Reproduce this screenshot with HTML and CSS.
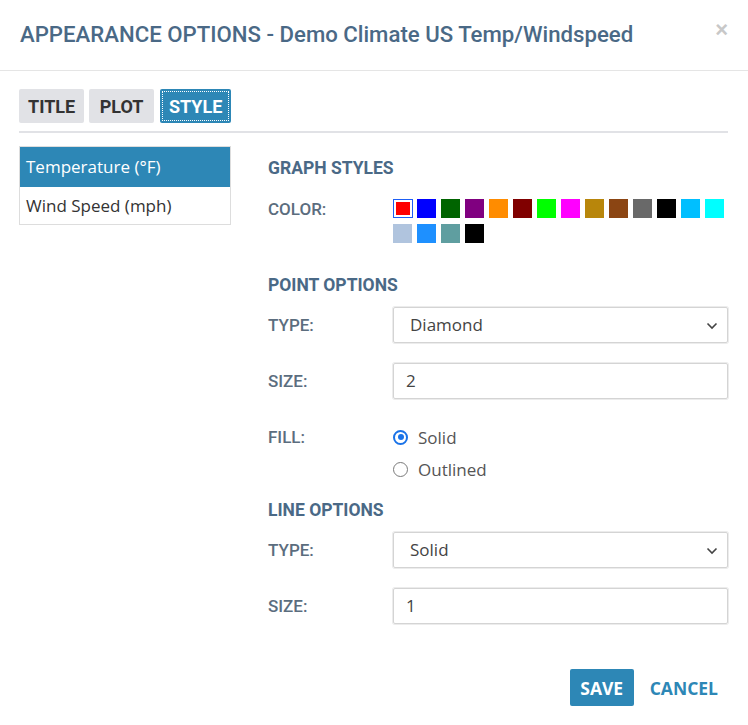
FILE: index.html
```html
<!DOCTYPE html>
<html>
<head>
<meta charset="utf-8">
<link rel="stylesheet" href="styles.css">
</head>
<body>
<div class="modal">
  <div class="modal-header">
    <h1 class="modal-title">APPEARANCE OPTIONS - Demo Climate US Temp/Windspeed</h1>
    <span class="close">&times;</span>
  </div>
  <div class="modal-body">
    <div class="tabs">
      <button class="tab">TITLE</button>
      <button class="tab tab-plot">PLOT</button>
      <button class="tab active">STYLE</button>
    </div>
    <div class="content">
      <ul class="series-list">
        <li class="series selected">Temperature (°F)</li>
        <li class="series">Wind Speed (mph)</li>
      </ul>
      <div class="options">
        <h2 class="section first">GRAPH STYLES</h2>
        <div class="row color-row">
          <div class="label">COLOR:</div>
          <div class="swatches">
            <span class="swatch selected"><span style="background:#ff0000"></span></span>
            <span class="swatch" style="background:#0000ff"></span>
            <span class="swatch" style="background:#006400"></span>
            <span class="swatch" style="background:#800080"></span>
            <span class="swatch" style="background:#ff8c00"></span>
            <span class="swatch" style="background:#800000"></span>
            <span class="swatch" style="background:#00ff00"></span>
            <span class="swatch" style="background:#ff00ff"></span>
            <span class="swatch" style="background:#b8860b"></span>
            <span class="swatch" style="background:#8b4513"></span>
            <span class="swatch" style="background:#696969"></span>
            <span class="swatch" style="background:#000000"></span>
            <span class="swatch" style="background:#00bfff"></span>
            <span class="swatch" style="background:#00ffff"></span>
            <span class="swatch" style="background:#b0c4de"></span>
            <span class="swatch" style="background:#1e90ff"></span>
            <span class="swatch" style="background:#5f9ea0"></span>
            <span class="swatch" style="background:#000000"></span>
          </div>
        </div>

        <h2 class="section">POINT OPTIONS</h2>
        <div class="row field-row first-field">
          <div class="label">TYPE:</div>
          <div class="select">Diamond<svg class="chev" viewBox="0 0 12 8" width="12" height="8"><path d="M1.5 1.5 L6 6 L10.5 1.5" fill="none" stroke="#444" stroke-width="1.6"/></svg></div>
        </div>
        <div class="row field-row">
          <div class="label">SIZE:</div>
          <div class="input">2</div>
        </div>
        <div class="row fill-row">
          <div class="label">FILL:</div>
          <div class="radios">
            <label class="radio"><span class="dot checked"></span>Solid</label>
            <label class="radio"><span class="dot"></span>Outlined</label>
          </div>
        </div>

        <h2 class="section line-sec">LINE OPTIONS</h2>
        <div class="row field-row first-field">
          <div class="label">TYPE:</div>
          <div class="select">Solid<svg class="chev" viewBox="0 0 12 8" width="12" height="8"><path d="M1.5 1.5 L6 6 L10.5 1.5" fill="none" stroke="#444" stroke-width="1.6"/></svg></div>
        </div>
        <div class="row field-row">
          <div class="label">SIZE:</div>
          <div class="input">1</div>
        </div>
      </div>
    </div>
  </div>
  <div class="modal-footer">
    <button class="btn save">SAVE</button>
    <button class="btn cancel">CANCEL</button>
  </div>
</div>
</body>
</html>
```

FILE: styles.css
```css
* { box-sizing: border-box; }
html, body { margin: 0; padding: 0; background: #fff; }
body { font-family: "Open Sans", "Liberation Sans", sans-serif; color: #333; }

.modal { width: 748px; height: 725px; background: #fff; }

.modal-header {
  display: flex;
  align-items: center;
  justify-content: space-between;
  height: 71px;
  padding: 0 20px 2px 20px;
  border-bottom: 1px solid #e5e5e5;
}
.modal-title {
  margin: 0;
  font-family: Roboto, "Liberation Sans", sans-serif;
  font-weight: 500;
  font-size: 22.2px;
  color: #4a6986;
}
.close {
  font-family: "Liberation Sans", sans-serif;
  font-size: 22px;
  font-weight: bold;
  color: #c8c8c8;
  line-height: 1;
  margin-top: -8px;
}

.modal-body { padding: 18px 20px 0 19px; }

.tabs {
  display: flex;
  gap: 5px;
  padding-bottom: 8px;
  border-bottom: 2px solid #e1e2e6;
}
.tab {
  height: 34px;
  padding: 0 9px;
  border: none;
  border-radius: 2px;
  background: #e1e2e6;
  color: #333;
  font-family: Roboto, sans-serif;
  font-weight: 700;
  font-size: 18px;
}
.tab-plot { padding: 0 10.5px; }
.tab.active {
  margin-left: 1px;
  background: #2d87b6;
  color: #fff;
  outline: 1px dotted #fff;
  outline-offset: -3px;
}

.content {
  display: grid;
  grid-template-columns: 212px 460px;
  column-gap: 37px;
  margin-top: 13px;
}

.series-list {
  list-style: none;
  margin: 0;
  padding: 0;
  border: 1px solid #ddd;
  align-self: start;
}
.series {
  height: 37px;
  line-height: 37px;
  padding: 0 6px;
  font-size: 17px;
  color: #333;
}
.series.selected { background: #2d87b6; color: #fff; height: 40px; line-height: 40px; }

.options { padding-top: 10px; }
.section {
  margin: 30px 0 0 0;
  font-family: Roboto, sans-serif;
  font-weight: 700;
  font-size: 17.5px;
  line-height: 24px;
  color: #4a6986;
}
.section.first { margin-top: 0; }
.section.line-sec { margin-top: 13px; }

.row { display: grid; grid-template-columns: 125px 1fr; align-items: center; }
.label {
  font-family: Roboto, sans-serif;
  font-weight: 500;
  font-size: 17px;
  color: #5b6d7e;
}

.color-row { margin-top: 19px; align-items: start; }
.color-row .label { line-height: 21px; }
.swatches {
  display: flex;
  flex-wrap: wrap;
  gap: 6px 5px;
  width: 335px;
}
.swatch { display: block; width: 19px; height: 19px; }
.swatch.selected {
  border: 1px solid #1d5ef5;
  padding: 2px;
  width: 20px;
  margin-right: -1px;
}
.swatch.selected span { display: block; width: 100%; height: 100%; }

.field-row { margin-top: 20px; }
.field-row.first-field { margin-top: 10px; }
.select, .input {
  position: relative;
  height: 36px;
  border: 1px solid #d4d4d4;
  box-shadow: 0 0 0 1px #ececec;
  border-radius: 2px;
  padding: 0 16px;
  font-size: 17px;
  line-height: 34px;
  color: #444;
}
.input { padding-left: 12px; }
.chev { position: absolute; right: 9px; top: 14px; }

.fill-row { margin-top: 22px; align-items: start; }
.fill-row .label { line-height: 32px; }
.radios { display: flex; flex-direction: column; }
.radio {
  display: flex;
  align-items: center;
  height: 32px;
  font-size: 17px;
  color: #555;
}
.dot {
  width: 15px;
  height: 15px;
  border-radius: 50%;
  border: 1.5px solid #7a7a7a;
  margin-right: 10px;
  position: relative;
}
.dot.checked { border: 2px solid #1a73e8; }
.dot.checked::after {
  content: "";
  position: absolute;
  left: 2.5px; top: 2.5px;
  width: 6px; height: 6px;
  border-radius: 50%;
  background: #1a73e8;
}

.modal-footer {
  display: flex;
  justify-content: flex-end;
  gap: 6px;
  padding: 45px 20px 0 0;
}
.btn {
  height: 37px;
  border: none;
  border-radius: 2px;
  font-family: "Open Sans", sans-serif;
  font-weight: 700;
  font-size: 17.5px;
  padding: 0 10px;
  background: transparent;
  color: #2d87b6;
}
.btn.save { background: #2d87b6; color: #fff; width: 64px; padding: 0; }
```
